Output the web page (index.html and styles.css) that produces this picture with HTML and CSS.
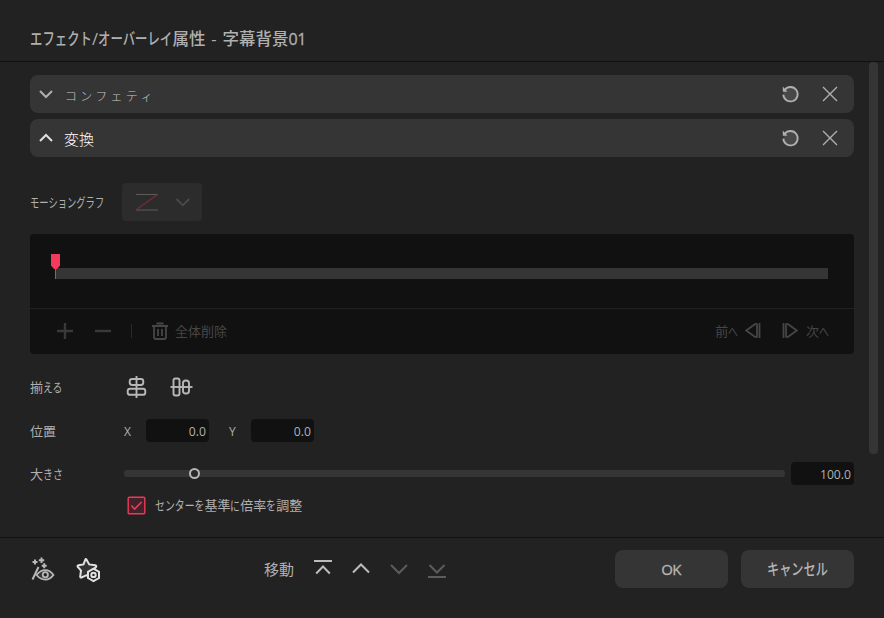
FILE: index.html
```
<!DOCTYPE html>
<html lang="ja">
<head>
<meta charset="utf-8">
<title>エフェクト/オーバーレイ属性</title>
<link rel="stylesheet" href="styles.css">
</head>
<body>
<div class="dialog">
  <header class="title"><span class="k k5">エフェクト</span><span class="slash">/</span><span class="k k6">オーバーレイ</span><span>属性</span><span class="dash">-</span><span>字幕背景</span><span class="num">01</span></header>
  <div class="scroll">
    <main class="content">
      <section class="bar first">
        <svg class="chev" width="16" height="16" viewBox="0 0 16 16"><path d="M2 5l6 6 6-6"/></svg>
        <span class="name wide">コンフェティ</span>
        <svg class="reset" width="20" height="20" viewBox="0 0 20 20"><circle cx="10.5" cy="10" r="7" fill="#484848" stroke="none"/><path d="M4.8 5.8A7.2 7.2 0 1 1 3.3 10.6"/><path class="solid" d="M2.8 2.4v5.3h4.6z"/></svg>
        <svg class="close" width="16" height="16" viewBox="0 0 16 16"><path d="M1 1l14 14M15 1L1 15"/></svg>
      </section>
      <section class="bar">
        <svg class="chev open" width="16" height="16" viewBox="0 0 16 16"><path d="M2 11l6-6 6 6"/></svg>
        <span class="name active">変換</span>
        <svg class="reset" width="20" height="20" viewBox="0 0 20 20"><circle cx="10.5" cy="10" r="7" fill="#484848" stroke="none"/><path d="M4.8 5.8A7.2 7.2 0 1 1 3.3 10.6"/><path class="solid" d="M2.8 2.4v5.3h4.6z"/></svg>
        <svg class="close" width="16" height="16" viewBox="0 0 16 16"><path d="M1 1l14 14M15 1L1 15"/></svg>
      </section>
      <div class="motion">
        <label><span class="k k8">モーショングラフ</span></label>
        <div class="drop">
          <svg width="80" height="38" viewBox="0 0 80 38"><path d="M14 11.5h22M14 27h22" stroke="#5c5c5c"/><path d="M14.5 26.5l21-15" stroke="#762c3b"/><path d="M54.5 16l6.3 6.3 6.3-6.3" stroke="#4b4b4b" stroke-width="1.8"/></svg>
        </div>
      </div>
      <section class="timeline">
        <div class="track-area">
          <svg class="playhead" width="9" height="25" viewBox="0 0 9 25"><path d="M0 0h9v11.500L6 15H3L0 11.500z" fill="#f23a5a" stroke="none"/><path d="M4.500 14v11" stroke="#d3405a" stroke-width="1"/></svg>
          <div class="track"></div>
        </div>
        <div class="tools">
          <svg class="plus" width="18" height="18" viewBox="0 0 18 18"><path d="M9 1v16M1 9h16"/></svg>
          <svg class="minus" width="18" height="18" viewBox="0 0 18 18"><path d="M1 9h16"/></svg>
          <i class="sep"></i>
          <svg class="trash" width="18" height="18" viewBox="0 0 18 18"><path d="M1 4h16M5.500 1.500h7M3 4.500V15q0 2 2 2h8q2 0 2-2V4.500M7 7v7M11 7v7"/></svg>
          <span class="delete">全体削除</span>
          <span class="prev">前<span class="k k1">へ</span></span>
          <svg class="back" width="17" height="17" viewBox="0 0 17 17"><path d="M13 1.400v14.200M15.500 1v15M12.600 2Q11.500 1.700 10.500 2.500L2.200 8.500l8.300 6q1 .8 2.100.5"/></svg>
          <svg class="next" width="17" height="17" viewBox="0 0 17 17"><path d="M4 1.400v14.200M1.500 1v15M4.400 2Q5.500 1.700 6.500 2.500l8.300 6-8.300 6q-1 .8-2.100.5"/></svg>
          <span>次<span class="k k1">へ</span></span>
        </div>
      </section>
      <div class="row align">
        <label>揃<span class="k k2">える</span></label>
        <svg class="icon" width="24" height="24" viewBox="0 0 24 24"><rect x="5.700" y="4" width="13.600" height="6" rx="2.400"/><rect x="3.700" y="13.800" width="17.600" height="6" rx="2.400"/><path d="M12.500 1v22"/></svg>
        <svg class="icon second" width="24" height="24" viewBox="0 0 24 24"><rect x="4.500" y="3.500" width="6" height="17" rx="2"/><rect x="14" y="5.500" width="6" height="13" rx="2.800"/><path d="M1.500 12h22"/></svg>
      </div>
      <div class="row position">
        <label>位置</label>
        <span class="axis">X</span><span class="field">0.0</span>
        <span class="axis y">Y</span><span class="field">0.0</span>
      </div>
      <div class="row size">
        <label>大<span class="k k2">きさ</span></label>
        <div class="slider"><i class="thumb"></i></div>
        <span class="field">100.0</span>
      </div>
      <div class="check">
        <svg width="19" height="19" viewBox="0 0 19 19"><rect x="1.200" y="1.200" width="16.600" height="16.600" rx="1" fill="#40222a" stroke="#ef3857" stroke-width="1.400"/><path d="M4.300 9.600l3.300 3.500 7-7.200" fill="none" stroke="#f23a5a" stroke-width="1.500"/></svg>
        <span class="check-text"><span class="k k5">センターを</span>基準<span class="k k1">に</span>倍率<span class="k k1">を</span>調整</span>
      </div>
    </main>
    <div class="scrollbar"></div>
  </div>
  <footer class="footer">
    <svg class="magic" width="26" height="26" viewBox="0 0 26 26"><path d="M2.500 22.500L8.500 10" stroke-width="2"/><path class="plusses" d="M5 2.500v5M2.500 5h5M11.500 .5v5.400M8.800 3.200h5.400M14.200 6.300v5M11.700 8.800h5"/><path d="M6.500 18Q10.500 13.200 15.300 13.200T23.500 18Q20 22.600 15.300 22.600T6.500 18z" fill="#343434"/><circle cx="15.300" cy="17.800" r="2.600" fill="#222"/></svg>
    <svg class="star" width="26" height="26" viewBox="0 0 26 26"><path d="M10.300 2.300l2.900 5.100 6 .9q1.700.4.8 1.700l-4 4.200.5 6-6-2-5 2.300q-1.300.3-1.300-1l.8-6L1.800 9.900Q1 8.600 2.500 8.200l5-.8L9.400 2.500q.4-.7.900-.2z" fill="#343434"/><path d="M17.500 11.700l5.500 3.100v6.200l-5.500 3.200-5.500-3.200v-6.200z" fill="#222"/><circle cx="17.500" cy="17.900" r="2.200"/></svg>
    <span class="move">移動</span>
    <svg class="order" width="20" height="20" viewBox="0 0 20 20"><path d="M1 3h18M3.200 15.500l6.800-7 6.800 7"/></svg>
    <svg class="order" width="20" height="20" viewBox="0 0 20 20"><path d="M2 14.500l8-8 8 8"/></svg>
    <svg class="order off" width="20" height="20" viewBox="0 0 20 20"><path d="M2 7l8 8 8-8"/></svg>
    <svg class="order off" width="20" height="20" viewBox="0 0 20 20"><path d="M2.500 7l7.500 7.500L17.500 7M1 19h18"/></svg>
    <button class="button ok">OK</button>
    <button class="button"><span class="k k5">キャンセル</span></button>
  </footer>
</div>
</body>
</html>
```
FILE: styles.css
```
* { box-sizing: border-box; }
body {
  margin: 0;
  background: #222;
  color: #b0b0b0;
  font: 13px/20px "Open Sans", "Noto Sans CJK JP", sans-serif;
  overflow: hidden;
}
svg { display: block; flex: none; fill: none; stroke: currentColor; stroke-width: 1.5; }
.solid { fill: currentColor; stroke: none; }
.dialog { width: 884px; height: 618px; display: flex; flex-direction: column; }

/* Condensed kana: glyphs are narrowed and the freed advance is taken back. */
.k { display: inline-block; transform: scaleX(var(--s)); transform-origin: left; --s: .76; white-space: nowrap; margin-right: calc((var(--s) - 1) * var(--n) * 1em); }
.k1 { --n: 1; }
.k2 { --n: 2; }
.k5 { --n: 5; }
.k6 { --n: 6; }
.k8 { --n: 8; --s: .715; }

.title {
  height: 62px;
  padding: 17px 0 0 30px;
  border-bottom: 1px solid #111;
  display: flex;
  align-items: center;
  font-size: 16.5px;
  font-weight: 500;
  line-height: 24px;
}
.title .k { --s: .75; }
.slash { width: 6.5px; }
.dash { width: 17px; text-align: center; }
.num { font-size: 16px; letter-spacing: -.4px; -webkit-text-stroke: .3px; }

.scroll { height: 475px; display: flex; }
.content { width: 824px; margin-left: 30px; padding-top: 13px; }
.scrollbar { width: 9px; height: 392px; margin-left: 15px; border-radius: 4px; background: #353535; }

.bar { height: 38px; border-radius: 8px; background: #353535; display: flex; align-items: center; padding-left: 8px; margin-bottom: 6px; }
.chev { stroke-width: 2; }
.open { color: #e0e0e0; }
.name { margin-left: 10px; flex: 1; font-family: "Noto Sans CJK JP", sans-serif; font-weight: 300; }
.wide { margin-left: 11px; font-size: 12px; letter-spacing: 3.3px; padding-top: 4px; color: #c4c4c4; }
.active { font-size: 15px; color: #fff; padding-top: 2px; }
.reset { margin-right: 22px; stroke-width: 1.8; }
.close { margin-right: 16px; stroke-width: 1.4; }
.reset, .close { position: relative; top: -.5px; }

.motion { height: 38px; margin-top: 26px; display: grid; grid-template-columns: 92px 80px; align-items: center; }
.drop { height: 38px; border-radius: 4px; background: #2c2c2c; }
.drop svg { stroke-width: 1.2; }

.timeline { height: 120px; margin-top: 13px; background: #111; border-radius: 4px; }
.track-area { height: 75px; padding: 34px 26px 0 25px; border-bottom: 1px solid #222; position: relative; }
.track { height: 11px; background: #353535; }
.playhead { position: absolute; left: 21px; top: 20px; }
.tools { height: 43px; padding: 0 25px 0 26px; display: flex; align-items: center; color: #464646; }
.tools svg { stroke-width: 1.8; }
.tools .plus, .tools .minus { stroke-width: 2.4; color: #393939; }
.minus { margin-left: 20px; }
.sep { width: 1px; height: 14px; margin: 0 19px 0 19px; background: #2a2a2a; }
.delete { margin-left: 6px; }
.prev { margin-left: auto; }
.back { margin-left: 6px; }
.next { margin: 0 7px 0 21px; }

.row { display: flex; align-items: center; height: 44px; }
.row label { width: 94px; flex: none; }
.align { margin-top: 11px; }
.icon { color: #b8b8b8; stroke-width: 1.9; }
.second { margin-left: 21px; }
.axis { width: 22px; font-size: 12px; padding-top: 1px; }
.axis.y { margin-left: 20px; }
.field { width: 63px; height: 23px; flex: none; padding-right: 3px; border-radius: 4px; background: #111; text-align: right; font-size: 12.2px; line-height: 25px; }
.position { height: 44px; }
.position label { padding-bottom: 1px; }
.position .field { position: relative; top: -.5px; }
.size { height: 41px; }
.slider { width: 661px; height: 7px; margin-right: 6px; background: #353535; border-radius: 3px; position: relative; }
.thumb { position: absolute; left: 65px; top: -2px; width: 11px; height: 11px; border: 2px solid #b5b5b5; border-radius: 50%; background: #292929; }
.check { display: flex; align-items: center; margin-left: 97px; height: 22px; }
.check-text { margin-left: 9px; }

.footer { height: 81px; border-top: 1px solid #111; padding: 12px 30px 0; display: flex; }
.magic, .star { margin-top: 7px; stroke-width: 2; }
.magic { margin-left: 0; color: #b8b8b8; stroke-width: 1.8; }
.plusses { stroke-width: 2; }
.star { margin-left: 20px; color: #e2e2e2; }
.move { width: 30px; margin: 9px 19px 0 162px; font-size: 15px; }
.order { margin: 8px 18px 0 0; color: #bcbcbc; stroke-width: 2; }
.off { color: #5c5c5c; }
.button { width: 113px; height: 38px; padding: 0; border: 0; border-radius: 8px; background: #353535; color: #b5b5b5; font: 500 16px/38px "Open Sans", "Noto Sans CJK JP", sans-serif; flex: none; }
.ok { margin-left: auto; margin-right: 13px; padding-right: 1px; font-size: 15px; letter-spacing: -.8px; -webkit-text-stroke: .3px; }
```
